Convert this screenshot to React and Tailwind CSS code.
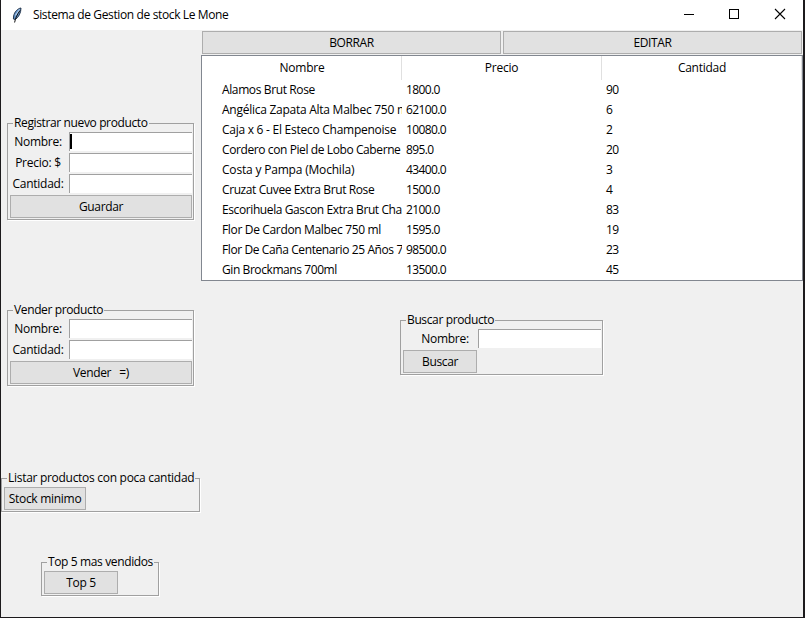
const products = [
  ['Alamos Brut Rose', '1800.0', '90', 'tracking-[-0.38px]'],
  ['Angélica Zapata Alta Malbec 750 ml', '62100.0', '6', 'tracking-[-0.26px]'],
  ['Caja x 6 - El Esteco Champenoise', '10080.0', '2', 'tracking-[-0.26px]'],
  ['Cordero con Piel de Lobo Caberne', '895.0', '20', 'tracking-[-0.4px]'],
  ['Costa y Pampa (Mochila)', '43400.0', '3', 'tracking-[-0.19px]'],
  ['Cruzat Cuvee Extra Brut Rose', '1500.0', '4', 'tracking-[-0.4px]'],
  ['Escorihuela Gascon Extra Brut Cha', '2100.0', '83', 'tracking-[-0.4px]'],
  ['Flor De Cardon Malbec 750 ml', '1595.0', '19', 'tracking-[-0.34px]'],
  ['Flor De Caña Centenario 25 Años 7', '98500.0', '23', 'tracking-[-0.4px]'],
  ['Gin Brockmans 700ml', '13500.0', '45', 'tracking-[-0.42px]'],
];

function Button({ children, className = '' }) {
  return (
    <button className={`block h-[23px] shrink-0 whitespace-pre border border-[#adadad] bg-[#e1e1e1] text-center leading-[21px] ${className}`}>
      {children}
    </button>
  );
}

function Group({ title, className = '', children }) {
  return (
    <fieldset className={`min-w-0 shrink-0 border border-[#a0a0a0] pl-[2px] pr-px shadow-[1px_1px_0_#fff] ${className}`}>
      <legend className="ml-[3px] h-4 whitespace-nowrap bg-[#f0f0f0] px-px leading-4">{title}</legend>
      {children}
    </fieldset>
  );
}

function Field({ label, labelWidth = 'w-[59px] pr-[3px]', focused = false }) {
  return (
    <div className="flex h-[21px] items-start pt-px">
      <span className={`${labelWidth} shrink-0 text-center leading-5 tracking-[-0.25px]`}>{label}</span>
      <div className="flex h-[19px] flex-1 items-start border-l border-t border-[#a0a0a0] bg-white pt-px">
        {focused && <span className="h-[15px] w-[2px] bg-black" />}
      </div>
    </div>
  );
}

function TitleBar() {
  return (
    <header className="flex h-[30px] shrink-0 items-center bg-white pl-[10px]">
      <svg width="12" height="18" viewBox="0 0 12 18" className="shrink-0">
        <path d="M10 2C6.5 2.5 3.4 6 2.6 10L2.4 13 4.2 13.5C7.5 11.5 10 7 10 2Z" fill="#5f8fc4" stroke="#1b2a40" strokeWidth="0.9" />
        <path d="M8.6 3.5 4.4 9.5" stroke="#b5d0ec" strokeWidth="1.2" />
        <path d="M9 4.5C6.4 8 4.4 12 3.6 16.5" stroke="#111" strokeWidth="1" fill="none" />
      </svg>
      <h1 className="ml-[10px] flex-1 pb-px font-normal">Sistema de Gestion de stock Le Mone</h1>
      <svg width="140" height="30" viewBox="0 0 140 30" fill="none" stroke="#000" className="shrink-0">
        <path d="M21 14.5h10M66.5 9.5h9v9h-9z" shapeRendering="crispEdges" />
        <path d="m112 9 10 10m0-10-10 10" strokeWidth="1.1" />
      </svg>
    </header>
  );
}

function ProductTable() {
  return (
    <div className="h-[226px] shrink-0 overflow-hidden border border-[#828790] bg-white">
      <div className="grid h-6 grid-cols-[200px_200px_1fr] text-center leading-[24px] tracking-[-0.25px]">
        <span className="border-r border-[#e0e0e0] pl-px">Nombre</span>
        <span className="border-r border-[#e0e0e0]">Precio</span>
        <span className="border-r border-[#e0e0e0] pl-px">Cantidad</span>
      </div>
      {products.map(([name, price, qty, tracking]) => (
        <div key={name} className="grid h-5 grid-cols-[200px_200px_1fr] whitespace-nowrap leading-[20px]">
          <span className={`overflow-hidden pl-5 ${tracking}`}>{name}</span>
          <span className="pl-1 tracking-[-0.62px]">{price}</span>
          <span className="pl-1 tracking-[-0.55px]">{qty}</span>
        </div>
      ))}
    </div>
  );
}

export default function App() {
  return (
    <div className="flex h-[618px] w-[805px] flex-col overflow-hidden border-b border-l border-r-2 border-[#1c1a1c] bg-[#f0f0f0] font-['Open_Sans','Noto_Sans',sans-serif] text-[12px] tracking-[-0.37px] text-black">
      <TitleBar />
      <div className="flex flex-1">
        <aside className="flex w-[200px] shrink-0 flex-col items-start pt-[85px]">
          <Group title="Registrar nuevo producto" className="ml-[6px] h-[105px] w-[187px]">
            <Field label="Nombre:" focused />
            <Field label="Precio: $" />
            <Field label="Cantidad:" />
            <Button className="mt-px w-[182px]">Guardar</Button>
          </Group>
          <Group title="Vender producto" className="ml-[6px] mt-[82px] h-[84px] w-[187px]">
            <Field label="Nombre:" />
            <Field label="Cantidad:" />
            <Button className="mt-px w-[182px]">{'Vender   =)'}</Button>
          </Group>
          <Group title="Listar productos con poca cantidad" className="mt-[84px] h-[42px] w-[199px] tracking-[-0.29px]">
            <Button className="mt-px w-[82px]">Stock minimo</Button>
          </Group>
          <Group title="Top 5 mas vendidos" className="ml-[40px] mt-[42px] h-[42px] w-[118px]">
            <Button className="mt-px w-[74px]">Top 5</Button>
          </Group>
        </aside>
        <main className="flex w-[602px] flex-col">
          <div className="flex h-[25px] gap-[2px] px-px pt-px">
            <Button className="w-[299px]">BORRAR</Button>
            <Button className="w-[299px]">EDITAR</Button>
          </div>
          <ProductTable />
          <Group title="Buscar producto" className="ml-[199px] mt-[31px] h-[63px] w-[203px]">
            <Field label="Nombre:" labelWidth="w-[75px] pl-[9px]" />
            <Button className="mt-px w-[74px]">Buscar</Button>
          </Group>
        </main>
      </div>
    </div>
  );
}
